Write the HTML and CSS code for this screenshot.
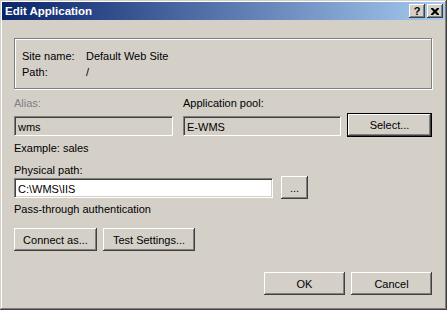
FILE: index.html
```html
<!DOCTYPE html>
<html lang="en">
<head>
  <meta charset="UTF-8">
  <title>Edit Application</title>
  <link rel="stylesheet" href="styles.css">
</head>
<body>
  <div class="window">
    <div class="titlebar">
      <span class="title">Edit Application</span>
      <div class="caption-btns">
        <span class="cap-btn help">?</span>
        <span class="cap-btn">
          <svg width="8" height="7" viewBox="0 0 8 7">
            <path d="M0 0h2l2 2 2-2h2v1l-2.5 2.5L8 6v1H6L4 5 2 7H0V6l2.5-2.5L0 1z" fill="#000"/>
          </svg>
        </span>
      </div>
    </div>

    <div class="content">
      <div class="groupbox">
        <div class="info-row"><span class="info-label">Site name:</span><span>Default Web Site</span></div>
        <div class="info-row"><span class="info-label">Path:</span><span>/</span></div>
      </div>

      <div class="alias-row">
        <div class="field alias-field">
          <div class="label disabled">Alias:</div>
          <div class="input readonly">wms</div>
        </div>
        <div class="field pool-field">
          <div class="label">Application pool:</div>
          <div class="input readonly">E-WMS</div>
        </div>
        <button class="btn default select-btn">Select...</button>
      </div>

      <div class="hint">Example: sales</div>

      <div class="label path-label">Physical path:</div>
      <div class="path-row">
        <div class="input path-input">C:\WMS\IIS</div>
        <button class="btn browse-btn">...</button>
      </div>

      <div class="auth">Pass-through authentication</div>

      <div class="btn-row">
        <button class="btn connect-btn">Connect as...</button>
        <button class="btn test-btn">Test Settings...</button>
      </div>

      <div class="footer">
        <button class="btn dlg-btn">OK</button>
        <button class="btn dlg-btn">Cancel</button>
      </div>
    </div>
  </div>
</body>
</html>
```

FILE: styles.css
```css
* {
  margin: 0;
  padding: 0;
  box-sizing: border-box;
}

body {
  font-family: 'Liberation Sans', Arial, sans-serif;
  font-size: 11px;
  color: #000;
  background: #d4d0c8;
}

.window {
  width: 447px;
  height: 310px;
  background: #d4d0c8;
  padding: 2px;
  box-shadow: inset -1px -1px #404040, inset 1px 1px #d4d0c8,
              inset -2px -2px #808080, inset 2px 2px #ffffff;
}

/* Title bar */
.titlebar {
  height: 18px;
  display: flex;
  align-items: center;
  justify-content: space-between;
  padding: 0 2px 0 2px;
  background: linear-gradient(to right, #0a246a, #a6caf0);
}

.title {
  color: #fff;
  font-weight: 700;
  font-size: 11.5px;
  padding-left: 1px;
}

.caption-btns {
  display: flex;
  gap: 2px;
}

.cap-btn {
  width: 16px;
  height: 14px;
  background: #d4d0c8;
  display: flex;
  align-items: center;
  justify-content: center;
  font-weight: 700;
  font-size: 11px;
  box-shadow: inset -1px -1px #404040, inset 1px 1px #ffffff,
              inset -2px -2px #808080;
}

.cap-btn.help {
  padding-bottom: 1px;
}

/* Dialog body */
.content {
  padding: 0 13px 0 12px;
}

.groupbox {
  margin-top: 18px;
  height: 51px;
  border: 1px solid #808080;
  box-shadow: inset 1px 1px #ffffff, 1px 1px #ffffff;
  padding: 9px 0 0 7px;
}

.info-row {
  display: flex;
  line-height: 16px;
}

.info-label {
  width: 64px;
}

.label,
.hint,
.auth {
  line-height: 13px;
}

.label.disabled {
  color: #808080;
}

.alias-row {
  display: flex;
  align-items: flex-start;
  margin-top: 8px;
}

.field .input {
  margin-top: 6px;
}

.alias-field {
  width: 159px;
}

.pool-field {
  width: 158px;
  margin-left: 10px;
}

.input {
  height: 20px;
  line-height: 18px;
  padding: 1px 3px;
  background: #ffffff;
  border: 1px solid;
  border-color: #808080 #ffffff #ffffff #808080;
  box-shadow: inset 1px 1px #404040, inset -1px -1px #d4d0c8;
  white-space: nowrap;
}

.input.readonly {
  background: #d4d0c8;
}

.btn {
  font-family: inherit;
  font-size: 11px;
  color: #000;
  background: #d4d0c8;
  border: none;
  height: 23px;
  box-shadow: inset -1px -1px #404040, inset 1px 1px #ffffff,
              inset -2px -2px #808080;
}

.btn.default {
  border: 1px solid #000;
  height: 24px;
}

.select-btn {
  width: 85px;
  margin-left: 6px;
  margin-top: 16px;
}

.hint {
  margin-top: 5px;
}

.path-label {
  margin-top: 9px;
  line-height: 12px;
}

.path-row {
  display: flex;
  align-items: flex-start;
}

.path-input {
  width: 259px;
  margin-top: 2px;
}

.browse-btn {
  width: 27px;
  margin-left: 8px;
}

.auth {
  margin-top: 4px;
}

.btn-row {
  display: flex;
  gap: 6px;
  margin-top: 12px;
}

.connect-btn {
  width: 83px;
}

.test-btn {
  width: 92px;
}

.footer {
  display: flex;
  justify-content: flex-end;
  gap: 6px;
  margin-top: 21px;
}

.dlg-btn {
  width: 81px;
}
```
